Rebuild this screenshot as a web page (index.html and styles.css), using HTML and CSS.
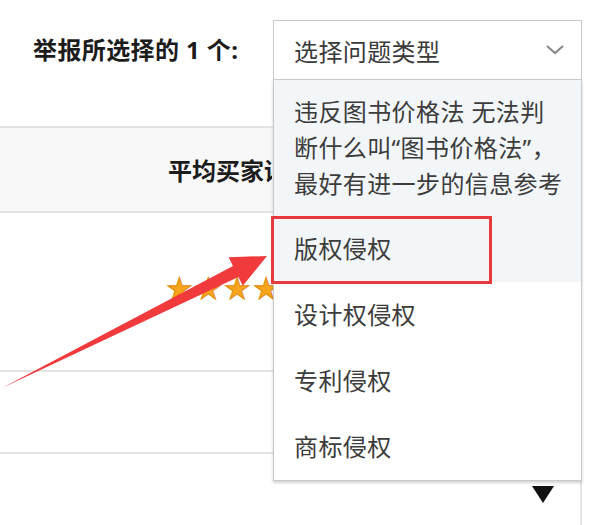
FILE: index.html
```html
<!DOCTYPE html>
<html>
  <head>
    <meta charset="utf-8">
    <title>举报</title>
    <link rel="stylesheet" href="styles.css">
  </head>
  <body>
    <div class="page">
      <div class="report">
        <span class="report-label">举报所选择的 1 个:</span>
        <div class="select">
          <div class="select-box">
            <span>选择问题类型</span>
            <svg class="chevron" width="20" height="12" viewBox="0 0 20 12">
              <path d="M2 2 L10 9 L18 2" fill="none" stroke="#8a8a8a" stroke-width="2.2"/>
            </svg>
          </div>
          <ul class="select-menu">
            <li class="opt opt-hover">违反图书价格法 无法判断什么叫“图书价格法”，最好有进一步的信息参考</li>
            <li class="opt opt-hover">版权侵权</li>
            <li class="opt">设计权侵权</li>
            <li class="opt">专利侵权</li>
            <li class="opt">商标侵权</li>
          </ul>
        </div>
      </div>

      <div class="tbl">
        <div class="tr th"><span class="th-text">平均买家评论</span></div>
        <div class="tr row-stars">
          <span class="stars"><span class="star">★</span><span class="star">★</span><span class="star">★</span><span class="star">★</span><span class="star">★</span></span>
        </div>
        <div class="tr row-plain"></div>
        <div class="tr row-last"><span class="caret"></span></div>
      </div>

      <!-- annotation overlays -->
      <div class="mark"></div>
      <svg class="arrow" width="606" height="525" viewBox="0 0 606 525">
        <polygon points="2,388 233,266 228.6,257.2 267,256 242.8,285.8 238.4,276.9" fill="#f03a3c"/>
      </svg>
    </div>
  </body>
</html>
```

FILE: styles.css
```css
body {
  margin: 0;
  background: #fff;
  font-family: "Noto Sans", "Noto Sans CJK SC", sans-serif;
  color: #333;
}

.page {
  position: relative;
  width: 606px;
  height: 525px;
  overflow: hidden;
}

.report {
  display: flex;
  padding-top: 20px;
}

.report-label {
  box-sizing: border-box;
  width: 273px;
  padding-left: 33px;
  line-height: 60px;
  font-size: 24px;
  font-weight: bold;
  letter-spacing: 0.4px;
  color: #1c1c1c;
}

.select {
  position: relative;
  width: 309px;
  z-index: 2;
}

.select-box {
  box-sizing: border-box;
  height: 60px;
  display: flex;
  align-items: center;
  justify-content: space-between;
  padding: 0 16px 0 20px;
  border: 1px solid #c9c9c9;
  border-bottom-color: #d4d4d4;
  background: #fff;
  font-size: 24px;
  letter-spacing: 0.4px;
  color: #3a3a3a;
}

.select-menu {
  position: absolute;
  top: 59px;
  left: 0;
  right: 0;
  margin: 0;
  padding: 0;
  list-style: none;
  background: #fff;
  border: 1px solid #c9c9c9;
  box-shadow: 0 2px 3px rgba(0, 0, 0, 0.18);
}

.opt {
  padding: 15px 14px 15px 20px;
  line-height: 36px;
  font-size: 24px;
  letter-spacing: 0.4px;
  color: #3c3c3c;
}

.opt:first-child {
  padding-top: 14px;
  padding-bottom: 14px;
}

.opt-hover {
  background: #f3f6f9;
}

.tbl {
  width: 580px;
  margin-top: 46px;
  border-right: 2px solid #e6e6e6;
}

.tr {
  border-top: 2px solid #e4e4e4;
}

.th {
  height: 83px;
  display: flex;
  align-items: center;
  padding-left: 168px;
  background: #f8f8f8;
  font-size: 24px;
  font-weight: bold;
  color: #1c1c1c;
}

/* the rest of the heading and stars sits under the open menu */
.th-text {
  width: 104px;
  overflow: hidden;
  white-space: nowrap;
}

.row-stars {
  height: 159px;
  display: flex;
  align-items: center;
  padding-left: 166px;
  padding-bottom: 6px;
  box-sizing: border-box;
}

.stars {
  display: flex;
  width: 107px;
  overflow: hidden;
}

.star {
  flex: none;
  font-family: "DejaVu Sans", sans-serif;
  font-size: 30px;
  line-height: 1;
  color: #f7a51c;
  -webkit-text-stroke: 1px #e08d10;
  margin-right: 2px;
}

.row-plain {
  height: 80px;
}

.row-last {
  height: 80px;
  padding: 32px 0 0 532px;
  box-sizing: border-box;
}

.caret {
  display: block;
  width: 0;
  height: 0;
  border-left: 11px solid transparent;
  border-right: 11px solid transparent;
  border-top: 17px solid #111;
}

.mark {
  position: absolute;
  left: 271px;
  top: 216px;
  width: 215px;
  height: 62px;
  border: 3px solid #e83a3d;
  z-index: 3;
}

.arrow {
  position: absolute;
  left: 0;
  top: 0;
  z-index: 4;
  pointer-events: none;
}
```
